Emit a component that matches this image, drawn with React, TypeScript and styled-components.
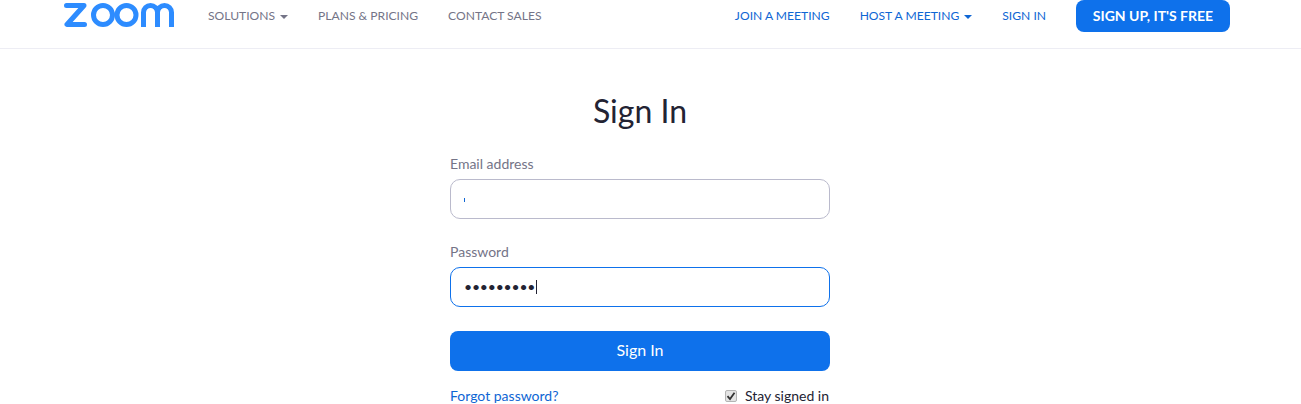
import React from 'react';
import styled, { createGlobalStyle } from 'styled-components';

const GlobalStyle = createGlobalStyle`
  html, body { margin: 0; padding: 0; background: #fff; overflow: hidden; }
  body { font-family: Lato, "Open Sans", sans-serif; color: #232333; }
`;

const Header = styled.header`
  height: 48px;
  border-bottom: 1px solid #ededf4;
  display: flex;
  align-items: flex-start;
  padding: 0 71px 0 64px;
`;

const Logo = styled.svg`
  width: 111px;
  height: 28px;
  display: block;
  margin-right: 33px;
`;

const NavGroup = styled.nav<{ $right?: boolean }>`
  display: flex;
  align-items: center;
  height: 32px;
  gap: 30px;
  margin-left: ${(p) => (p.$right ? 'auto' : '0')};
`;

const NavLink = styled.a<{ $blue?: boolean }>`
  font-size: 12.1px;
  line-height: 34px;
  white-space: nowrap;
  color: ${(p) => (p.$blue ? '#0e66d4' : '#747487')};
  display: flex;
  align-items: center;
`;

const Caret = styled.span`
  margin-left: 5px;
  margin-top: 1px;
  border-top: 4px solid currentColor;
  border-left: 4px solid transparent;
  border-right: 4px solid transparent;
`;

const SignUpButton = styled.a`
  width: 154px;
  height: 32px;
  border-radius: 8px;
  background: #0e71eb;
  color: #fff;
  font-size: 14px;
  font-weight: 700;
  line-height: 32px;
  text-align: center;
  white-space: nowrap;
`;

const Main = styled.main`
  display: flex;
  flex-direction: column;
  align-items: center;
  padding-right: 21px;
`;

const Title = styled.h1`
  margin: 42px 0 0;
  font-size: 32px;
  font-weight: 400;
  line-height: 40px;
  color: #232333;
`;

const Form = styled.form`
  width: 380px;
  margin-top: 24px;
`;

const Field = styled.div`
  margin-bottom: 24px;
`;

const Label = styled.label`
  display: block;
  font-size: 14px;
  line-height: 18px;
  margin-bottom: 6px;
  color: #747487;
`;

const InputWrap = styled.div`
  position: relative;
`;

const Input = styled.input<{ $focused?: boolean }>`
  display: block;
  box-sizing: border-box;
  width: 100%;
  height: 40px;
  padding: 0 13px 2px;
  border-radius: 10px;
  border: 1px solid ${(p) => (p.$focused ? '#0e71eb' : '#babacc')};
  outline: none;
  background: #fff;
  font-family: Lato, sans-serif;
  font-size: 14px;
  letter-spacing: -0.2px;
  color: #232333;
`;

const EmailTick = styled.span`
  position: absolute;
  left: 14px;
  top: 19px;
  width: 1px;
  height: 4px;
  background: #0e66d4;
`;

const TextCaret = styled.span`
  position: absolute;
  left: 86px;
  top: 13px;
  width: 1px;
  height: 14px;
  background: #232333;
`;

const SubmitButton = styled.button`
  display: block;
  width: 100%;
  height: 40px;
  border: 0;
  border-radius: 8px;
  background: #0e71eb;
  color: #fff;
  font-family: Lato, sans-serif;
  font-size: 16px;
  padding: 0 0 4px;
`;

const FootRow = styled.div`
  display: flex;
  justify-content: space-between;
  align-items: center;
  margin-top: 16px;
  font-size: 14px;
  line-height: 18px;
`;

const ForgotLink = styled.a`
  color: #0e66d4;
`;

const Stay = styled.span`
  display: flex;
  align-items: center;
  padding-right: 1px;
  color: #232333;
`;

const CheckBox = styled.span`
  box-sizing: border-box;
  width: 12px;
  height: 12px;
  margin-right: 8px;
  border: 1px solid #b4b4b4;
  border-radius: 2px;
  background: #e4e4e4;
  display: flex;
  align-items: center;
  justify-content: center;
`;

export default function App() {
  return (
    <>
      <GlobalStyle />
      <Header>
        <Logo viewBox="0 0 111 28" aria-label="zoom">
          <g fill="none" stroke="#2d8cff" strokeWidth="5">
            <path d="M2.5 5.5H20L3 24.5H20.5" strokeLinejoin="round" strokeLinecap="round" />
            <circle cx="39" cy="15" r="9.5" />
            <circle cx="62.5" cy="15" r="9.5" />
            <path d="M79.5 27V12.5a7 7 0 0 1 14 0V27M93.5 12.5a7 7 0 0 1 14 0V27" />
          </g>
        </Logo>
        <NavGroup>
          <NavLink>SOLUTIONS<Caret /></NavLink>
          <NavLink>PLANS &amp; PRICING</NavLink>
          <NavLink>CONTACT SALES</NavLink>
        </NavGroup>
        <NavGroup $right>
          <NavLink $blue>JOIN A MEETING</NavLink>
          <NavLink $blue>HOST A MEETING<Caret /></NavLink>
          <NavLink $blue>SIGN IN</NavLink>
          <SignUpButton>SIGN UP, IT'S FREE</SignUpButton>
        </NavGroup>
      </Header>
      <Main>
        <Title>Sign In</Title>
        <Form>
          <Field>
            <Label>Email address</Label>
            <InputWrap>
              <Input readOnly />
              <EmailTick />
            </InputWrap>
          </Field>
          <Field>
            <Label>Password</Label>
            <InputWrap>
              <Input $focused readOnly type="password" value="secret123" />
              <TextCaret />
            </InputWrap>
          </Field>
          <SubmitButton type="button">Sign In</SubmitButton>
          <FootRow>
            <ForgotLink>Forgot password?</ForgotLink>
            <Stay>
              <CheckBox>
                <svg width="10" height="10" viewBox="0 0 10 10">
                  <path d="M1.5 5.2L4 8L8.5 1.8" fill="none" stroke="#333" strokeWidth="1.8" />
                </svg>
              </CheckBox>
              Stay signed in
            </Stay>
          </FootRow>
        </Form>
      </Main>
    </>
  );
}
